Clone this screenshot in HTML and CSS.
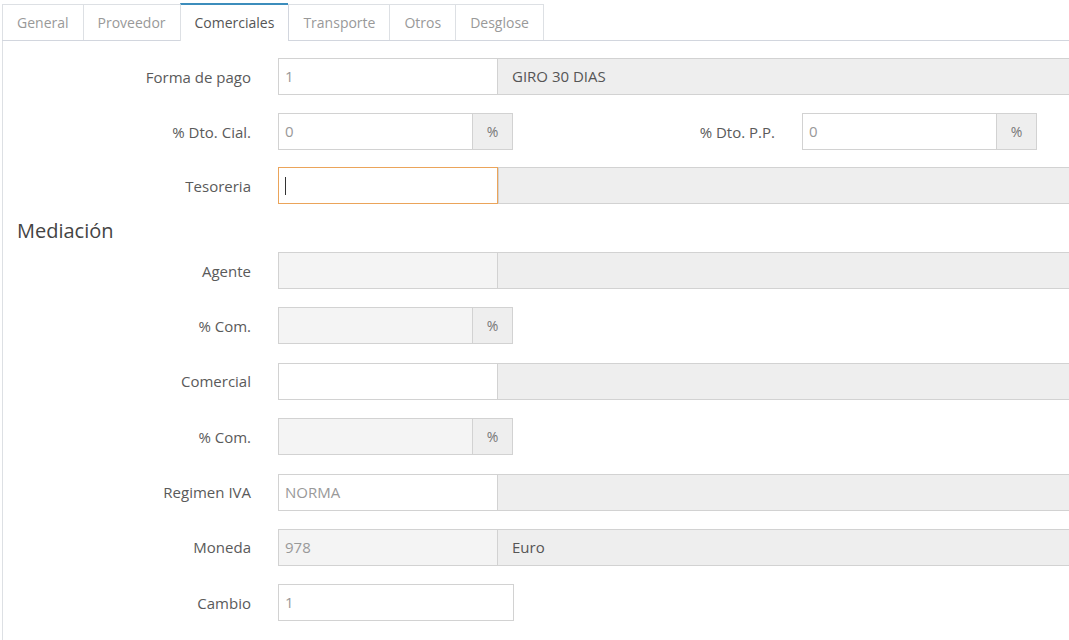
FILE: index.html
```html
<!DOCTYPE html>
<html lang="es">
<head>
<meta charset="utf-8">
<title>Proveedor - Comerciales</title>
<link rel="stylesheet" href="styles.css">
</head>
<body>
<div class="page">
  <ul class="tabs">
    <li class="tab">General</li>
    <li class="tab">Proveedor</li>
    <li class="tab active">Comerciales</li>
    <li class="tab">Transporte</li>
    <li class="tab">Otros</li>
    <li class="tab last">Desglose</li>
  </ul>

  <div class="panel">
    <div class="row">
      <label class="label">Forma de pago</label>
      <div class="field code">1</div>
      <div class="desc">GIRO 30 DIAS</div>
    </div>

    <div class="row">
      <label class="label">% Dto. Cial.</label>
      <div class="field pct">0</div>
      <div class="addon">%</div>
      <label class="label label-second">% Dto. P.P.</label>
      <div class="field pct">0</div>
      <div class="addon">%</div>
    </div>

    <div class="row tight">
      <label class="label">Tesoreria</label>
      <div class="field code focused"><span class="caret"></span></div>
      <div class="desc desc-after-focus"></div>
    </div>

    <h3 class="section-title">Mediación</h3>

    <div class="section">
      <div class="row">
        <label class="label">Agente</label>
        <div class="field code disabled"></div>
        <div class="desc"></div>
      </div>

      <div class="row">
        <label class="label">% Com.</label>
        <div class="field pct disabled"></div>
        <div class="addon">%</div>
      </div>

      <div class="row">
        <label class="label">Comercial</label>
        <div class="field code"></div>
        <div class="desc"></div>
      </div>

      <div class="row">
        <label class="label">% Com.</label>
        <div class="field pct disabled"></div>
        <div class="addon">%</div>
      </div>

      <div class="row">
        <label class="label">Regimen IVA</label>
        <div class="field code">NORMA</div>
        <div class="desc"></div>
      </div>

      <div class="row">
        <label class="label">Moneda</label>
        <div class="field code disabled">978</div>
        <div class="desc">Euro</div>
      </div>

      <div class="row">
        <label class="label">Cambio</label>
        <div class="field wide">1</div>
      </div>
    </div>
  </div>
</div>
</body>
</html>
```

FILE: styles.css
```css
html, body {
  margin: 0;
  padding: 0;
  background: #fff;
  overflow: hidden;
}

body {
  font-family: "Open Sans", "Liberation Sans", sans-serif;
  font-size: 14px;
  color: #555;
}

.page {
  padding: 3px 0 0 2px;
  width: 1300px;
}

/* Tab strip */
.tabs {
  list-style: none;
  margin: 0;
  padding: 0;
  display: flex;
  align-items: flex-end;
  height: 37px;
  border-bottom: 1px solid #d2d6de;
}

.tab {
  height: 35px;
  line-height: 35px;
  padding: 0 14px;
  border-top: 1px solid #dde0e4;
  border-left: 1px solid #dde0e4;
  color: #999;
  background: #fff;
}

.tab.last {
  border-right: 1px solid #dde0e4;
}

.tab.active {
  height: 36px;
  line-height: 36px;
  border-top: 2px solid #3c8dbc;
  margin-bottom: -1px;
  color: #555;
  position: relative;
}

.tab.active + .tab {
  border-left-color: #d2d6de;
}

/* Content panel */
.panel {
  border-left: 1px solid #dde0e4;
  padding: 17px 0 40px 0;
}

.row {
  display: flex;
  align-items: center;
  height: 37px;
  margin-bottom: 18px;
}

.row.tight {
  margin-top: -1px;
}

.section .row {
  margin-bottom: 18.4px;
}

.label {
  width: 248px;
  margin-right: 27px;
  text-align: right;
  color: #5a5a5a;
  font-size: 15px;
}

.label-second {
  width: 262px;
}

.field,
.desc,
.addon {
  box-sizing: border-box;
  height: 37px;
  line-height: 35px;
  border: 1px solid #d2d2d2;
  font-size: 15px;
}

.field {
  padding: 0 6px;
  color: #999;
  background: #fff;
}

.field.code {
  width: 220px;
}

.field.pct {
  width: 195px;
}

.field.wide {
  width: 236px;
}

.field.disabled {
  background: #f4f4f4;
}

/* Focused input: orange outline, the description box starts right after it */
.field.focused {
  border-color: #eba45a;
  display: flex;
  align-items: center;
}

.caret {
  display: block;
  width: 1px;
  height: 18px;
  background: #333;
}

.desc {
  width: 700px;
  margin-left: -1px;
  padding: 0 14px;
  background: #eee;
  color: #555;
}

.desc.desc-after-focus {
  margin-left: 0;
}

.addon {
  width: 41px;
  margin-left: -1px;
  background: #eee;
  color: #777;
  text-align: center;
  font-size: 14px;
}

.section-title {
  margin: -2px 0 10px 14px;
  font-size: 20px;
  line-height: 22px;
  font-weight: normal;
  color: #444;
}
```
